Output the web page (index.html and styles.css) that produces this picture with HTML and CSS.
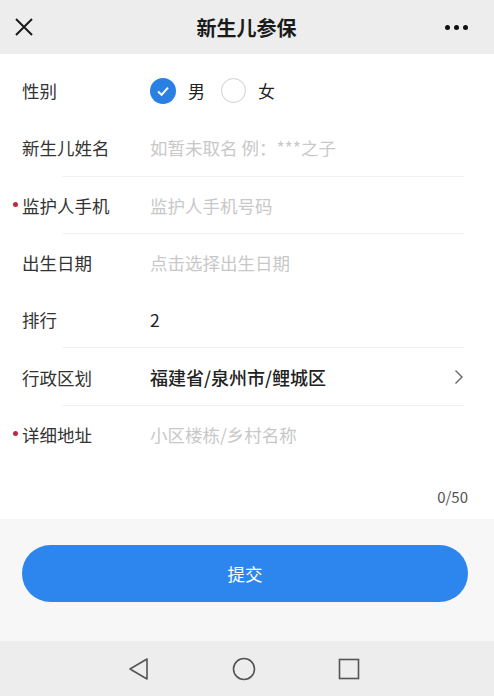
FILE: index.html
```html
<!DOCTYPE html>
<html lang="zh-CN">
<head>
  <meta charset="UTF-8" />
  <meta name="viewport" content="width=device-width, initial-scale=1.0"/>
  <title>新生儿参保</title>
  <link rel="stylesheet" href="styles.css">
</head>
<body>
  <div class="topbar">
    <svg class="close" width="20" height="20" viewBox="0 0 20 20">
      <path d="M2 2 L18 18 M18 2 L2 18" stroke="#1a1a1a" stroke-width="2" fill="none"/>
    </svg>
    <div class="title">新生儿参保</div>
    <div class="more"><i></i><i></i><i></i></div>
  </div>

  <div class="form">
    <div class="row">
      <div class="label">性别</div>
      <div class="gender">
        <span class="radio checked">
          <svg width="14" height="14" viewBox="0 0 14 14"><path d="M2 7.5 L5.6 10.8 L12 3.6" stroke="#fff" stroke-width="2" fill="none"/></svg>
        </span>
        <span class="opt">男</span>
        <span class="radio"></span>
        <span class="opt">女</span>
      </div>
    </div>
    <div class="row line">
      <div class="label">新生儿姓名</div>
      <div class="value hint">如暂未取名 例：***之子</div>
    </div>
    <div class="row line">
      <div class="label req">监护人手机</div>
      <div class="value hint">监护人手机号码</div>
    </div>
    <div class="row">
      <div class="label">出生日期</div>
      <div class="value hint">点击选择出生日期</div>
    </div>
    <div class="row line">
      <div class="label">排行</div>
      <div class="value">2</div>
    </div>
    <div class="row line">
      <div class="label">行政区划</div>
      <div class="value strong">福建省/泉州市/鲤城区</div>
      <svg class="arrow" width="10" height="16" viewBox="0 0 10 16"><path d="M1.5 1.5 L8 8 L1.5 14.5" stroke="#666" stroke-width="1.4" fill="none"/></svg>
    </div>
    <div class="row">
      <div class="label req">详细地址</div>
      <div class="value hint">小区楼栋/乡村名称</div>
    </div>
    <div class="counter">0/50</div>
  </div>

  <div class="actions">
    <button class="submit">提交</button>
  </div>

  <div class="navbar">
    <svg width="22" height="24" viewBox="0 0 22 24"><path d="M19 2 L19 22 L2 12 Z" stroke="#555" stroke-width="1.6" fill="none" stroke-linejoin="round"/></svg>
    <svg width="24" height="24" viewBox="0 0 24 24"><circle cx="12" cy="12" r="10.5" stroke="#555" stroke-width="1.6" fill="none"/></svg>
    <svg width="22" height="22" viewBox="0 0 22 22"><rect x="1.5" y="1.5" width="19" height="19" stroke="#555" stroke-width="1.6" fill="none"/></svg>
  </div>
</body>
</html>
```

FILE: styles.css
```css
body {
  margin: 0;
  width: 494px;
  height: 696px;
  display: flex;
  flex-direction: column;
  font-family: "Noto Sans CJK SC", "Noto Sans", sans-serif;
  background: #f7f7f7;
  color: #333;
}

.topbar {
  height: 54px;
  background: #ededed;
  display: flex;
  align-items: center;
  justify-content: space-between;
  padding: 0 26px 0 14px;
  box-sizing: border-box;
}

.close {
  display: block;
}

.title {
  font-size: 20px;
  font-weight: bold;
  color: #1a1a1a;
  margin-left: 14px;
}

.more {
  display: flex;
  gap: 4px;
}

.more i {
  width: 5px;
  height: 5px;
  border-radius: 50%;
  background: #111;
}

.form {
  background: #fff;
  padding-top: 8px;
}

.row {
  height: 57.3px;
  display: flex;
  align-items: center;
  padding: 0 30px 0 22px;
  position: relative;
}

.row.line::after {
  content: "";
  position: absolute;
  left: 62px;
  right: 30px;
  bottom: 0;
  height: 1px;
  background: #f1f1f1;
}

.label {
  width: 128px;
  font-size: 17.5px;
  color: #333;
  position: relative;
}

.label.req::before {
  content: "";
  position: absolute;
  left: -9px;
  top: 50%;
  width: 5px;
  height: 5px;
  margin-top: -3px;
  border-radius: 50%;
  background: #c0283c;
}

.value {
  flex: 1;
  font-size: 17.5px;
  color: #222;
}

.value.hint {
  color: #c8c8c8;
}

.value.strong {
  font-size: 18px;
  font-weight: 500;
}

.arrow {
  display: block;
}

.gender {
  display: flex;
  align-items: center;
}

.radio {
  width: 25px;
  height: 25px;
  border-radius: 50%;
  border: 1px solid #cfcfcf;
  box-sizing: border-box;
  display: flex;
  align-items: center;
  justify-content: center;
}

.radio.checked {
  width: 26px;
  height: 26px;
  border: none;
  background: #2a7fe3;
}

.opt {
  font-size: 17px;
  color: #222;
  margin: 0 16px 0 12px;
}

.counter {
  text-align: right;
  padding: 23px 26px 12px 0;
  font-size: 15px;
  color: #555;
}

.actions {
  flex: 1;
  padding: 0 26px 14px 22px;
  display: flex;
  align-items: center;
}

.submit {
  width: 100%;
  height: 57px;
  border: none;
  border-radius: 29px;
  background: #2c86ee;
  color: #fff;
  font-family: inherit;
  font-size: 17.5px;
}

.navbar {
  height: 55px;
  background: #ededed;
  display: flex;
  align-items: center;
  justify-content: center;
  gap: 82px;
  padding-right: 6px;
}

.navbar svg {
  display: block;
}
```
